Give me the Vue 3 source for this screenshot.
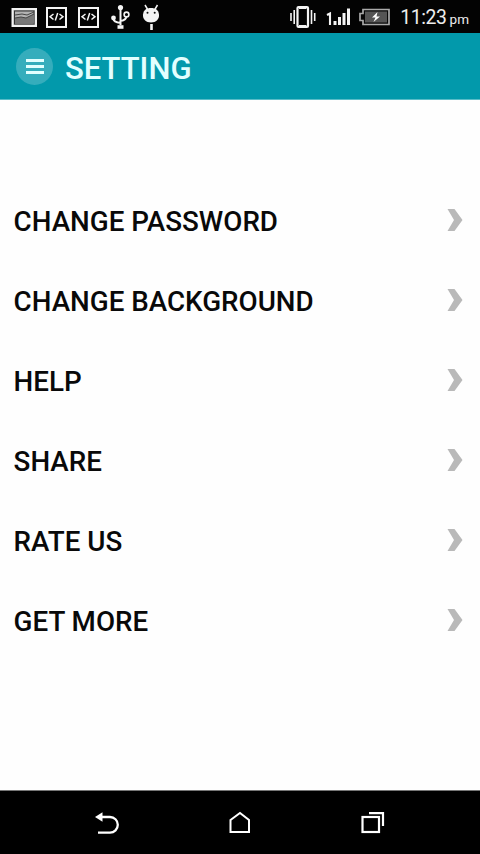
<script setup>
const items = ['CHANGE PASSWORD', 'CHANGE BACKGROUND', 'HELP', 'SHARE', 'RATE US', 'GET MORE']
</script>

<template>
  <div class="screen">
    <div class="status">
      <div class="notifications">
        <svg width="26" height="20" viewBox="0 0 26 20">
          <rect x="1.500" y="2" width="23.500" height="17" fill="#aaa" stroke="#f2f2f2" stroke-width="2" />
          <rect x="3.500" y="4" width="19.500" height="13" fill="#b2b2b2" stroke="#333" stroke-width="1" />
          <path d="M4 11l6-1 5 1 8-4v9.500H4z" fill="#777" />
          <path d="M4 8l7-1 5 1 7-3M4 11l6-1 5 1 8-4" fill="none" stroke="#444" stroke-width="1" />
        </svg>
        <svg v-for="n in 2" :key="n" width="22" height="22" viewBox="0 0 22 22" fill="none" stroke="#f4f4f4">
          <rect x="1" y="2" width="19" height="19" stroke-width="2" />
          <path d="M7.500 8L4 10.700l3.500 2.800M13.500 8l3.500 2.700-3.500 2.800M11.700 7l-2.400 7.500" stroke-width="1.500" />
        </svg>
        <svg class="usb" width="20" height="25" viewBox="0 0 20 25" fill="none" stroke="#f4f4f4" stroke-width="2">
          <path d="M10.500 3v18M3.500 14v1q0 3 7 4M10.500 17q6-1 6-5" />
          <circle cx="10.500" cy="3.500" r="2.600" fill="#f4f4f4" stroke="none" />
          <circle cx="3.500" cy="14" r="2.400" fill="#f4f4f4" stroke="none" />
          <circle cx="16.500" cy="10.500" r="2.400" stroke-width="1.600" />
          <path d="M7.500 23h6" stroke-width="3.600" />
        </svg>
        <svg class="droid" width="18" height="26" viewBox="0 0 18 26">
          <path d="M3 1l3 5M15.500 1l-3 5" stroke="#f4f4f4" stroke-width="1.500" />
          <path d="M1 10.500C1.500 6 4.500 4 9 4s7.500 2 8 6.500C17.500 15 14 18.500 9 18.500S.5 15 1 10.500z" fill="#f4f4f4" />
          <path d="M9.500 20v6" stroke="#f4f4f4" stroke-width="2.600" />
          <circle cx="5.500" cy="8.800" r="1" fill="#111" />
          <circle cx="12.700" cy="8.800" r="1" fill="#111" />
        </svg>
      </div>
      <div class="system">
        <svg width="28" height="24" viewBox="0 0 28 24" fill="none" stroke="#f4f4f4">
          <rect x="8.500" y="2" width="10.500" height="20" rx="1" stroke-width="2.200" />
          <path d="M10 3h7.500M10 21h7.500" stroke-width="2" />
          <path d="M2 8v8M5.200 5v14M22.500 5v14M25.700 8v8" stroke-width="1.600" />
        </svg>
        <svg class="signal" width="25" height="19" viewBox="0 0 25 19">
          <path d="M1 8l3-1.500V18" fill="none" stroke="#f4f4f4" stroke-width="2.100" />
          <path d="M7.500 14h3v4h-3zM12 10h3v8h-3zM16.500 6h3v12h-3zM21 1.500h3V18h-3z" fill="#f4f4f4" />
        </svg>
        <svg class="battery" width="31" height="19" viewBox="0 0 31 19">
          <path d="M4 2.500h26v15H4v-4H1v-7h3z" fill="#080808" stroke="#aaa" stroke-width="1.700" />
          <rect x="6" y="4.500" width="22" height="11" fill="#555" />
          <path d="M18.500 5l-5.500 5.500h3.500L14.500 15l6.500-5.500h-3.500z" fill="#fff" />
        </svg>
        <span class="time">11:23</span><span class="pm">pm</span>
      </div>
    </div>

    <header class="appbar">
      <button class="menu" aria-label="Menu">
        <svg width="18" height="15" viewBox="0 0 18 15">
          <path d="M0 1.500h18M0 7.500h18M0 13.500h18" stroke="#e2ffff" stroke-width="2.800" />
        </svg>
      </button>
      <h1>SETTING</h1>
    </header>

    <ul class="list">
      <li v-for="item in items" :key="item">
        <span>{{ item }}</span>
        <svg width="16" height="24" viewBox="0 0 16 24">
          <path d="M0.500 1H7.500L15.500 12L7.500 23H0.500L7 12z" fill="#b9b9b9" />
        </svg>
      </li>
    </ul>

    <nav class="navbar">
      <svg width="24" height="23" viewBox="0 0 24 23">
        <path d="M6 6h9a7.800 7.800 0 0 1 0 15.600H3" fill="none" stroke="#fff" stroke-width="2.300" />
        <path d="M0 6L7.500 1.200v9.600z" fill="#fff" />
      </svg>
      <svg class="home" width="22" height="23" viewBox="0 0 22 23">
        <path d="M1.500 9L11 2l9 7v12H1.500z" fill="none" stroke="#fff" stroke-width="2" />
      </svg>
      <svg width="24" height="23" viewBox="0 0 24 23" fill="none" stroke="#fff">
        <rect x="1.500" y="6" width="16.500" height="15" stroke-width="2.200" />
        <path d="M8 2.200h14V15" stroke-width="2.200" />
      </svg>
    </nav>
  </div>
</template>

<style>
body {
  margin: 0;
  background: #fefefe;
}
</style>

<style scoped>
.screen {
  width: 480px;
  height: 854px;
  display: flex;
  flex-direction: column;
  overflow: hidden;
  background: #fefefe;
  font-family: Roboto, "Liberation Sans", sans-serif;
}
svg {
  display: block;
  flex: none;
}
.status {
  height: 33px;
  flex: none;
  box-sizing: border-box;
  display: flex;
  justify-content: space-between;
  background: #030303;
  padding: 0 11px;
  color: #ededed;
}
.notifications,
.system {
  display: flex;
  align-items: center;
}
.notifications {
  gap: 9px;
}
.notifications svg + svg + svg {
  margin-left: 1px;
}
.notifications .usb {
  margin-left: 1px;
}
.notifications .droid {
  margin-left: 3px;
}
.signal {
  margin-left: 9px;
}
.battery {
  margin-left: 8px;
}
.time {
  margin-left: 10px;
  font-size: 19.4px;
  letter-spacing: -0.4px;
  line-height: 36px;
  padding-top: 2px;
}
.pm {
  margin-left: 3px;
  font-size: 13.5px;
  line-height: 38px;
  padding-top: 5px;
}
.appbar {
  height: 67px;
  flex: none;
  box-sizing: border-box;
  display: flex;
  align-items: center;
  padding-left: 16px;
  background: #0299ab;
  border-bottom: 1px solid #59bdc8;
}
.menu {
  width: 37px;
  height: 37px;
  padding: 0;
  border: 0;
  border-radius: 50%;
  display: grid;
  place-items: center;
  background: #35adbc;
}
h1 {
  margin: 5px 0 0 12px;
  font-size: 31px;
  line-height: 38px;
  font-weight: 500;
  color: #e2ffff;
}
.list {
  flex: 1;
  margin: 0;
  padding: 80px 17px 0 13.6px;
  list-style: none;
}
.list li {
  height: 80px;
  display: flex;
  align-items: center;
  justify-content: space-between;
  font-size: 27.75px;
  line-height: 32px;
  font-weight: 500;
  color: #090909;
}
.list span {
  padding-top: 4px;
}
.navbar {
  height: 64px;
  flex: none;
  box-sizing: border-box;
  display: flex;
  justify-content: space-between;
  align-items: center;
  padding: 0 95px;
  background: #000;
  border-top: 1px solid #777;
}
</style>
